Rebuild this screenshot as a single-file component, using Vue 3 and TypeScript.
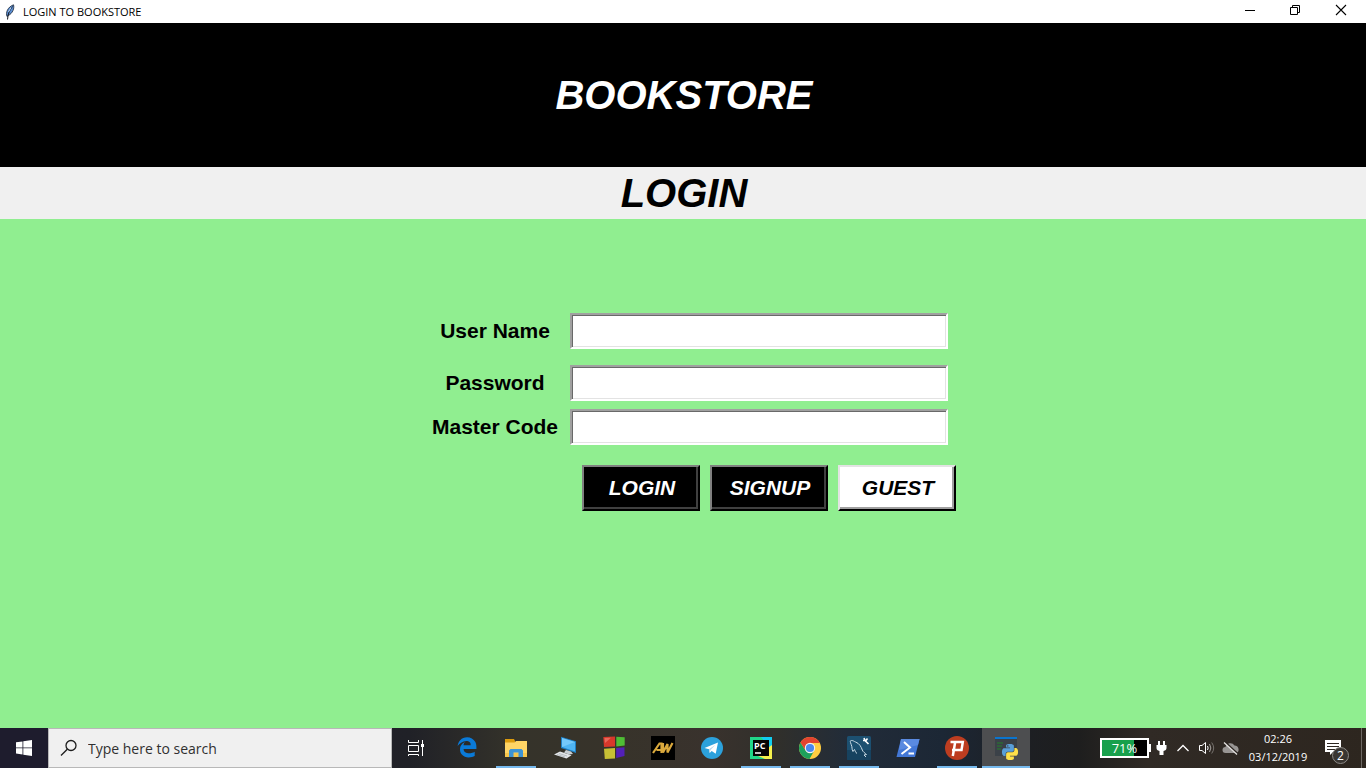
<script setup lang="ts">
import { ref } from 'vue'

interface Field {
  id: string
  label: string
  type: string
}

const fields: Field[] = [
  { id: 'username', label: 'User Name', type: 'text' },
  { id: 'password', label: 'Password', type: 'password' },
  { id: 'master', label: 'Master Code', type: 'password' },
]

const values = ref<Record<string, string>>({ username: '', password: '', master: '' })
const query = ref('')
</script>

<template>
  <div class="desktop">
    <header class="titlebar">
      <svg class="feather" width="12" height="16" viewBox="0 0 12 16">
        <path d="M3 12.500C1.500 9 3.500 3 9.500 .8c1 3.200-.5 8.500-5.500 10.900z" fill="#5b8fd4" stroke="#1d2633" stroke-width=".8" />
        <path d="M8.500 2.500C5.500 6 4 9.500 3.500 15.500" fill="none" stroke="#10141c" stroke-width="1" />
        <path d="M7 3.500L4.500 8" stroke="#b5d2f5" stroke-width="1" />
      </svg>
      <span class="title">LOGIN TO BOOKSTORE</span>
      <div class="window-buttons">
        <button type="button" aria-label="Minimize">
          <svg width="12" height="12" viewBox="0 0 12 12"><path d="M2 6.500h10" stroke="#000" /></svg>
        </button>
        <button type="button" aria-label="Restore">
          <svg width="12" height="12" viewBox="0 0 12 12" fill="none" stroke="#000"><path d="M1.500 3.500h7v7h-7zM3.500 3.500v-2h7v7h-2" /></svg>
        </button>
        <button type="button" aria-label="Close">
          <svg width="12" height="12" viewBox="0 0 12 12"><path d="M1 1l10 10M11 1L1 11" stroke="#000" stroke-width="1.100" /></svg>
        </button>
      </div>
    </header>

    <h1 class="banner">BOOKSTORE</h1>
    <h2 class="subtitle">LOGIN</h2>

    <main class="content">
      <form class="form" @submit.prevent>
        <div v-for="field in fields" :key="field.id" class="row" :class="field.id">
          <label :for="field.id">{{ field.label }}</label>
          <input :id="field.id" v-model="values[field.id]" :type="field.type" autocomplete="off" />
        </div>
        <div class="actions">
          <button type="submit">LOGIN</button>
          <button type="button">SIGNUP</button>
          <button type="button" class="light">GUEST</button>
        </div>
      </form>
    </main>

    <footer class="taskbar">
      <button type="button" class="start" aria-label="Start">
        <svg width="16" height="16" viewBox="0 0 16 16" fill="#fff">
          <path d="M0 2.300L6.500 1.400v6.100H0zM7.300 1.300L16 0v7.500H7.300zM0 8.300h6.500v6.200L0 13.600zM7.300 8.300H16V16l-8.700-1.300z" />
        </svg>
      </button>
      <div class="search">
        <svg width="18" height="18" viewBox="0 0 18 18" fill="none" stroke="#1c1c1c" stroke-width="1.300">
          <circle cx="11" cy="6.500" r="5" />
          <path d="M7.300 10.200L1 16.500" />
        </svg>
        <input v-model="query" type="text" aria-label="Search" placeholder="Type here to search" />
      </div>
      <button type="button" class="task view" aria-label="Task View">
        <svg width="24" height="24" viewBox="0 0 24 24" fill="none" stroke="#fff">
          <path d="M4.500 4v2.500h10V4M4.500 9.500h10v6h-10zM4.500 20v-1.500h10V20M18.500 4v16" />
          <path d="M17 8h3v3h-3z" fill="#fff" stroke="none" />
        </svg>
      </button>
      <nav class="apps">
        <button type="button" class="task" aria-label="Edge">
          <svg width="24" height="24" viewBox="-38 -20 588 588">
            <path fill="#0a7ad8" d="M486.286 243.671c0-44.032-7.754-84.465-28.801-122.405C416.498 47.879 343.912 8.001 258.893 8.001 118.962 7.724 40.617 113.214 26.056 227.679c42.429-61.312 117.073-121.376 220.375-124.966 0 0 109.666 0 99.419 104.957H169.997c6.369-37.386 18.554-58.986 34.339-78.926-75.048 34.893-121.850 96.096-120.742 188.315.83 71.448 50.124 144.836 120.743 171.976 83.357 31.847 192.776 7.200 240.132-21.324V363.307c-80.864 56.494-270.871 60.925-272.255-67.572h314.073z" />
          </svg>
        </button>
        <button type="button" class="task open" aria-label="File Explorer">
          <svg width="24" height="24" viewBox="0 0 24 24">
            <path d="M1 3h9l1 2v3H1z" fill="#dc9b0d" />
            <path d="M1 6.500h9.500l1.500-1.500h11v16H1z" fill="#ffd566" />
            <path d="M1 17h22v4H1z" fill="#f7c64c" />
            <path d="M5 21v-6.500l1.500-1.500h11l1.500 1.500V21h-4.500v-4.500h-5V21z" fill="#3d94d6" />
          </svg>
        </button>
        <button type="button" class="task" aria-label="This PC">
          <svg width="24" height="24" viewBox="0 0 24 24">
            <path d="M8 .7l15 4.600V17L8 12z" fill="#1f7fc4" />
            <path d="M9 2l13 4v9.500L9 11z" fill="#4fb4f2" />
            <path d="M9 2l13 4-13 5z" fill="#74c8fa" />
            <path d="M13 14l5 1.500 2 2.500-4 .5-5-2z" fill="#c9d0d4" />
            <path d="M1 18.500l6-3 11.500 3.800-5 3.200z" fill="#e2e5e7" />
            <path d="M4 18.500l8 2.500M6 17.500l8 2.500" stroke="#9ba3a8" stroke-width=".6" />
          </svg>
        </button>
        <button type="button" class="task" aria-label="Color Blocks">
          <svg width="24" height="24" viewBox="0 0 24 24">
            <path d="M1.300 1L13 .6v10l-11 .5z" fill="#d8382b" />
            <path d="M2.500 2L9 1.800 3 7z" fill="#e8685a" />
            <path d="M14.300 .7l8.400.5v8.300l-8.400 1z" fill="#4fbd35" />
            <path d="M2 12.700l11-.6v10.400L2.800 23z" fill="#c6bf35" />
            <path d="M14.200 12l8.300-.8V20l-8.300 2z" fill="#5320b8" />
          </svg>
        </button>
        <button type="button" class="task" aria-label="AW">
          <svg width="24" height="24" viewBox="0 0 24 24">
            <path d="M0 0h24v24H0z" fill="#000" />
            <path d="M2 17L8.500 7.500h2v9.500M5.500 14h5M12 7v9.500L16.500 8v8.500L21.500 7" fill="none" stroke="#d9a83c" stroke-width="2.200" />
          </svg>
        </button>
        <button type="button" class="task" aria-label="Telegram">
          <svg width="24" height="24" viewBox="0 0 24 24">
            <circle cx="12" cy="12" r="11" fill="#2ca1dc" />
            <path d="M4.500 12L18 6.500l-2.300 11.300-4-2.800-2 2-.7-3.700z" fill="#fff" />
            <path d="M9 13.300l6.500-4.500-5 5.200-.8 3z" fill="#b9d6ea" />
          </svg>
        </button>
        <button type="button" class="task open" aria-label="PyCharm">
          <svg width="24" height="24" viewBox="0 0 24 24">
            <path d="M1 1h22v22H1z" fill="#21d789" />
            <path d="M23 7v16h-7l-7-3 7-16z" fill="#f5f04c" />
            <path d="M12 1h11v8l-3 2z" fill="#12cdf0" />
            <path d="M4 4h16v16H4z" fill="#050505" />
            <path d="M6 17h6" stroke="#fff" stroke-width="1.500" />
            <text x="5" y="13" class="pc">PC</text>
          </svg>
        </button>
        <button type="button" class="task open" aria-label="Chrome">
          <svg width="24" height="24" viewBox="0 0 24 24">
            <circle cx="12" cy="12" r="11" fill="#ffcd41" />
            <path d="M12 12L2.470 6.500A11 11 0 0 1 21.530 6.500L21.800 7H12z" fill="#e2432f" />
            <path d="M2.470 6.500A11 11 0 0 0 11.500 23l4.800-8.500L12 12 7.700 14.500z" fill="#1da05c" />
            <path d="M2.470 6.500L7.700 14.500 12 7z" fill="#e2432f" />
            <circle cx="12" cy="12" r="5.200" fill="#f4f4f4" />
            <circle cx="12" cy="12" r="4.100" fill="#4a88ee" />
          </svg>
        </button>
        <button type="button" class="task open" aria-label="MySQL Workbench">
          <svg width="24" height="24" viewBox="0 0 24 24">
            <rect width="24" height="24" rx="1.500" fill="#1c5071" />
            <path d="M0 14h24v8.500a1.500 1.500 0 0 1-1.500 1.500h-21A1.500 1.500 0 0 1 0 22.500z" fill="#17425f" />
            <path d="M6 15.500C4.500 13 5.500 11.500 4.200 8.500 3 5.500 3 4.500 4.500 4.500c2 0 2.500 1 4 1.500 4 1.500 5.500 4.500 6.800 8 .7 2 2.700 3 4.200 4.500l-2.500.5 2 2M6 15.500l1.500-2c.8 1.500 1 3 2.500 4" fill="none" stroke="#cbdbe5" stroke-width="1" />
            <path d="M17 2l1 2.500L21.500 8M16 4.500h3l1.500-2" fill="none" stroke="#fff" stroke-width="1.600" />
          </svg>
        </button>
        <button type="button" class="task" aria-label="PowerShell">
          <svg width="24" height="24" viewBox="0 0 24 24">
            <path d="M5 3h18.500L19 21H.5z" fill="#4277d6" />
            <path d="M5 3h18.500l-1.500 6L3 14z" fill="#5a8ae0" />
            <path d="M8 6l6 5.500L5.500 18M12.500 17.500h5.500" fill="none" stroke="#fff" stroke-width="2" />
          </svg>
        </button>
        <button type="button" class="task open" aria-label="Psiphon">
          <svg width="24" height="24" viewBox="0 0 24 24">
            <circle cx="12" cy="12" r="12" fill="#bd3d20" />
            <path d="M5.500 6h12.300l-1.300 8H7M10.200 6L7.800 20" fill="none" stroke="#fff" stroke-width="2.500" />
          </svg>
        </button>
        <button type="button" class="task open active" aria-label="Python">
          <svg width="24" height="24" viewBox="0 0 24 24">
            <path d="M1 1h22v19H1z" fill="#3b4148" />
            <path d="M1 1h22v2H1z" fill="#0a75cf" />
            <path d="M3 7h6M3 10h5M3 13h4" stroke="#2c6b35" stroke-width="1.500" />
            <g transform="translate(8 8) scale(.667)">
              <path fill="#5a9fd8" d="M14.250.18l.9.2.73.26.59.3.45.32.34.34.25.34.16.33.1.3.04.26.02.2-.01.13V8.500l-.05.63-.13.55-.21.46-.26.38-.3.31-.33.25-.35.19-.35.14-.33.1-.3.07-.26.04-.21.02H8.770l-.69.05-.59.14-.5.22-.41.27-.33.32-.27.35-.2.36-.15.37-.1.35-.07.32-.04.27-.02.21v3.060H3.170l-.21-.03-.28-.07-.32-.12-.35-.18-.36-.26-.36-.36-.35-.46-.32-.59-.28-.73-.21-.88-.14-1.050-.05-1.230.06-1.220.16-1.040.24-.87.32-.71.36-.57.4-.44.42-.33.42-.24.4-.16.36-.1.32-.05.24-.01h.16l.06.01h8.160v-.83H6.180l-.01-2.750-.02-.37.05-.34.11-.31.17-.28.25-.26.31-.23.38-.2.44-.18.51-.15.58-.12.64-.1.71-.06.77-.04.84-.02 1.270.05zm-6.300 1.980l-.23.33-.08.41.08.41.23.34.33.22.41.09.41-.09.33-.22.23-.34.08-.41-.08-.41-.23-.33-.33-.22-.41-.09-.41.09z" />
              <path fill="#ffe04a" d="M21.040 6.110l.28.06.32.12.35.18.36.27.36.35.35.47.32.59.28.73.21.88.14 1.040.05 1.230-.06 1.230-.16 1.040-.24.86-.32.71-.36.57-.4.45-.42.33-.42.24-.4.16-.36.09-.32.05-.24.02-.16-.01h-8.220v.82h5.840l.01 2.760.02.36-.05.34-.11.31-.17.29-.25.25-.31.24-.38.2-.44.17-.51.15-.58.13-.64.09-.71.07-.77.04-.84.01-1.270-.04-1.070-.14-.9-.2-.73-.25-.59-.3-.45-.33-.34-.34-.25-.34-.16-.33-.1-.3-.04-.25-.02-.2.01-.13v-5.340l.05-.64.13-.54.21-.46.26-.38.3-.32.33-.24.35-.2.35-.14.33-.1.3-.06.26-.04.21-.02.13-.01h5.840l.69-.05.59-.14.5-.21.41-.28.33-.32.27-.35.2-.36.15-.36.1-.35.07-.32.04-.28.02-.21V6.070h2.090z" />
            </g>
          </svg>
        </button>
      </nav>

      <div class="tray">
        <div class="battery"><span class="level">71%</span></div>
        <svg class="plug" width="19" height="16" viewBox="0 0 19 16">
          <path d="M6 1h2v4h3V1h2v4h1.500v3c0 1.500-1 2.500-3 3v4h-4v-4c-2-.5-3-1.500-3-3V5H6z" fill="#fff" />
        </svg>
        <button type="button" aria-label="Show hidden icons">
          <svg width="14" height="10" viewBox="0 0 14 10" fill="none" stroke="#fff" stroke-width="1.300"><path d="M1.500 8L7 2.500 12.500 8" /></svg>
        </button>
        <button type="button" aria-label="Volume">
          <svg width="18" height="16" viewBox="0 0 18 16" fill="none" stroke="#fff">
            <path d="M1.500 5.500H4l3.500-3v11l-3.500-3H1.500z" />
            <path d="M9.500 6q1.300 2 0 4" />
            <path d="M11.500 4q2.700 4 0 8" stroke="#a8a5a2" />
            <path d="M13.700 2.500q4 5.500 0 11" stroke="#77736f" />
          </svg>
        </button>
        <button type="button" aria-label="OneDrive">
          <svg width="18" height="16" viewBox="0 0 18 16">
            <path d="M3.500 13a3 3 0 0 1 0-6 5 5 0 0 1 9-1.500 4 4 0 0 1 2 7.500z" fill="#989593" />
            <path d="M2.800 2l13 12" stroke="#2b2520" stroke-width="2" />
            <path d="M2 2.500l13 12" stroke="#e5e3e1" stroke-width="1.300" />
          </svg>
        </button>
        <time class="clock" datetime="2019-12-03T02:26"><span>02:26</span><span>03/12/2019</span></time>
        <button type="button" class="notice" aria-label="2 notifications">
          <svg width="26" height="26" viewBox="0 0 26 26">
            <path d="M1 1h16v12H9l-3 3v-3H1z" fill="#fff" />
            <path d="M3 4.500h12M3 7.500h12M3 10.500h8" stroke="#2d2721" />
            <circle cx="16.500" cy="16.500" r="8" fill="#3a3632" stroke="#8d8a87" />
            <text x="16.500" y="21" class="count">2</text>
          </svg>
        </button>
        <button type="button" class="peek" aria-label="Show desktop"></button>
      </div>
    </footer>
  </div>
</template>

<style>
body {
  margin: 0;
}
</style>

<style scoped>
.desktop {
  min-height: 100vh;
  display: flex;
  flex-direction: column;
  background: #90ee90;
  font-family: "Liberation Sans", Arial, sans-serif;
  color: #000;
}
button {
  padding: 0;
  border: 0;
  background: none;
  font: inherit;
  color: inherit;
}
svg {
  display: block;
  flex: none;
}
.titlebar {
  height: 23px;
  display: flex;
  align-items: center;
  padding-left: 4px;
  background: #fff;
}
.title {
  margin-left: 7px;
  font: 11px/22px "Open Sans", "Noto Sans", sans-serif;
}
.window-buttons {
  display: flex;
  margin-left: auto;
  padding-right: 2px;
  align-self: stretch;
}
.window-buttons button {
  width: 46px;
  padding-bottom: 3px;
  display: grid;
  place-items: center;
}
.banner,
.subtitle {
  margin: 0;
  padding-left: 2px;
  text-align: center;
  font-size: 40px;
  font-weight: bold;
  font-style: italic;
}
.banner {
  background: #000;
  color: #fff;
  line-height: 144px;
}
.subtitle {
  background: #f0f0f0;
  line-height: 52px;
}
.content {
  flex: 1;
  display: flex;
  justify-content: center;
  align-items: flex-start;
  padding-top: 94px;
}
.form {
  width: 546px;
}
.row {
  display: flex;
  align-items: center;
  margin-bottom: 8px;
}
.row.username {
  margin-bottom: 16px;
}
.row label {
  width: 150px;
  padding-left: 10px;
  text-align: center;
  font-size: 21px;
  font-weight: bold;
}
.row input {
  box-sizing: border-box;
  width: 378px;
  height: 36px;
  padding: 0 4px;
  border: 2px solid;
  border-color: #a0a0a0 #fff #fff #a0a0a0;
  border-radius: 0;
  box-shadow: inset 1px 1px #696969, inset -1px -1px #e3e3e3;
  background: #fff;
  outline: none;
  font: bold 21px "Liberation Sans", Arial, sans-serif;
}
.actions {
  display: flex;
  justify-content: flex-end;
  gap: 10px;
  margin-top: 20px;
}
.actions button {
  box-sizing: border-box;
  width: 118px;
  height: 46px;
  padding-left: 2px;
  border: 2px solid;
  border-color: #808080 #000 #000 #808080;
  box-shadow: inset -2px -2px #404040;
  background: #000;
  color: #fff;
  font-size: 21px;
  font-weight: bold;
  font-style: italic;
}
.actions .light {
  border-color: #e3e3e3 #000 #000 #e3e3e3;
  box-shadow: inset -2px -2px #a0a0a0;
  background: #fff;
  color: #000;
}
.taskbar {
  height: 40px;
  display: flex;
  background: linear-gradient(90deg, #1e1c2d 0, #1e1c2d 4%, #202127 30%, #35332a 38%, #37332a 45%, #39322d 52%, #302f2b 57%, #222c39 62%, #1c2735 69%, #1d1f23 75%, #1e1e1e 79%, #302a25 84%, #2d261f 100%);
}
.start {
  width: 48px;
  display: grid;
  place-items: center;
}
.search {
  box-sizing: border-box;
  width: 344px;
  display: flex;
  align-items: center;
  gap: 10px;
  padding-left: 11px;
  border: 1px solid #b8b8b8;
  background: #f0f0f0;
}
.search input {
  flex: 1;
  min-width: 0;
  padding: 0;
  border: 0;
  background: none;
  outline: none;
  font: 14px "Open Sans", "Noto Sans", sans-serif;
}
.search input::placeholder {
  color: #303030;
  opacity: 1;
}
.apps {
  display: flex;
  gap: 1px;
  margin-left: 3px;
}
.task {
  box-sizing: border-box;
  width: 48px;
  display: grid;
  place-items: center;
}
.task.open {
  background: linear-gradient(#76b9ed, #76b9ed) bottom / 40px 2px no-repeat;
}
.task.active {
  background: linear-gradient(#76b9ed, #76b9ed) bottom / 48px 2px no-repeat #4d4e50;
}
.pc {
  font: bold 9px "Open Sans", sans-serif;
  fill: #fff;
}
.tray {
  display: flex;
  align-items: center;
  margin-left: auto;
  color: #fff;
  font-family: "Open Sans", "Noto Sans", sans-serif;
}
.tray button {
  width: 24px;
  align-self: stretch;
  display: grid;
  place-items: center;
}
.battery {
  box-sizing: border-box;
  width: 49px;
  height: 20px;
  margin-right: 3px;
  border: 2px solid #fff;
  background: linear-gradient(90deg, #18a04c 71%, #000 71%);
  position: relative;
}
.battery::after {
  content: "";
  position: absolute;
  right: -4px;
  top: 4px;
  width: 2px;
  height: 8px;
  background: #fff;
}
.level {
  display: block;
  text-align: center;
  font-size: 13px;
  line-height: 16px;
}
.clock {
  width: 70px;
  display: flex;
  flex-direction: column;
  align-items: center;
  font-size: 11px;
  line-height: 18px;
}
.tray .notice {
  width: 48px;
  padding-top: 7px;
}
.count {
  font: 12px "Open Sans", sans-serif;
  fill: #fff;
  text-anchor: middle;
}
.tray .peek {
  width: 5px;
  border-left: 1px solid #6d6863;
}
</style>
